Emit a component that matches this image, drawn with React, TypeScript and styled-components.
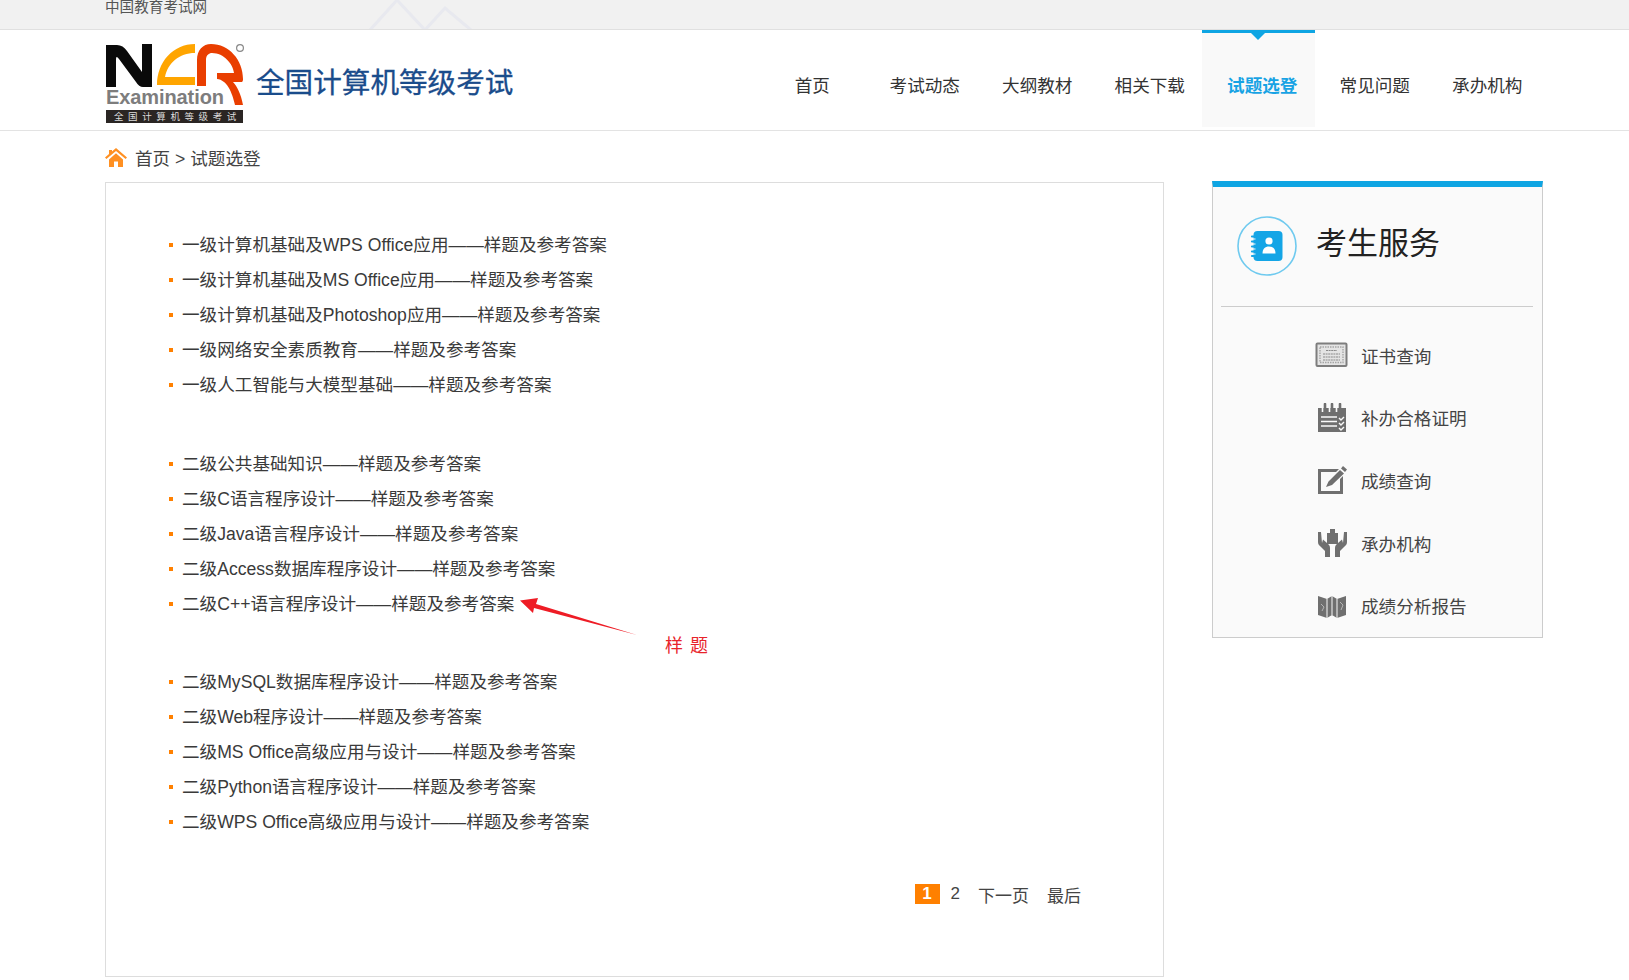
import styled, { createGlobalStyle } from "styled-components";

const GlobalStyle = createGlobalStyle`
  html, body {
    margin: 0;
    padding: 0;
    background: #fff;
    overflow: hidden;
  }
  body {
    font-family: "Liberation Sans", "Noto Sans CJK SC", sans-serif;
    color: #333;
  }
`;

const TopBar = styled.div`
  position: relative;
  height: 29px;
  background: #f1f1f1;
  border-bottom: 1px solid #e0e0e0;
  padding-left: 105px;
  overflow: hidden;
`;

const TopText = styled.span`
  display: block;
  font-size: 14.6px;
  line-height: 14px;
  color: #555;
`;

const Mountains = styled.svg`
  position: absolute;
  left: 365px;
  top: 0;
`;

const Header = styled.header`
  height: 100px;
  border-bottom: 1px solid #e3e3e3;
  padding: 0 89.5px 0 105px;
  display: flex;
  justify-content: space-between;
`;

const Brand = styled.div`
  display: flex;
  align-items: flex-start;
  padding-top: 14px;
`;

const BrandTitle = styled.div`
  margin: 21px 0 0 11px;
  font-size: 28.6px;
  line-height: 36px;
  color: #1a4c8b;
  -webkit-text-stroke: 0.3px #1a4c8b;
`;

const Nav = styled.nav`
  display: flex;
`;

const NavItem = styled.a<{ $active?: boolean }>`
  position: relative;
  box-sizing: border-box;
  width: 112.5px;
  height: 97px;
  padding: 39px 0 0 8px;
  text-align: center;
  font-size: 17.6px;
  line-height: 28px;
  color: ${(p) => (p.$active ? "#18a3e4" : "#333")};
  font-weight: ${(p) => (p.$active ? 700 : 400)};
  background: ${(p) => (p.$active ? "#f9f9f9" : "transparent")};
  border-top: ${(p) => (p.$active ? "3px solid #0ea5e3" : "3px solid transparent")};

  &::after {
    content: "";
    display: ${(p) => (p.$active ? "block" : "none")};
    position: absolute;
    top: 0;
    left: 50%;
    margin-left: -7px;
    border-left: 7.5px solid transparent;
    border-right: 7.5px solid transparent;
    border-top: 7px solid #0ea5e3;
  }
`;

const Crumbs = styled.div`
  height: 51px;
  padding: 2px 0 0 105px;
  box-sizing: border-box;
  display: flex;
  align-items: center;
  gap: 8px;
  font-size: 17.6px;
  color: #444;
`;

const Body = styled.div`
  display: flex;
  align-items: flex-start;
  gap: 48px;
  padding-left: 105px;
`;

const MainBox = styled.main`
  position: relative;
  box-sizing: border-box;
  width: 1059px;
  height: 795px;
  border: 1px solid #ddd;
  padding: 43px 82px 0 63px;
`;

const Group = styled.ul`
  list-style: none;
  margin: 0 0 43.5px;
  padding: 0;
`;

const Row = styled.li`
  display: flex;
  align-items: center;
  height: 35px;
  font-size: 17.6px;
  color: #3a3a3a;

  &::before {
    content: "";
    width: 4px;
    height: 4px;
    margin: 3px 9px 0 0;
    background: #ff8000;
  }
`;

const Pager = styled.div`
  display: flex;
  justify-content: flex-end;
  align-items: center;
  height: 20px;
  margin-top: 46px;
  font-size: 17px;
  color: #444;
`;

const PageNow = styled.span`
  width: 25px;
  height: 20px;
  line-height: 20px;
  text-align: center;
  background: #ff8000;
  color: #fff;
  font-weight: 700;
`;

const PageLink = styled.a<{ $gap: number }>`
  margin-left: ${(p) => p.$gap}px;
`;

const ArrowMark = styled.svg`
  position: absolute;
  left: 409px;
  top: 412px;
`;

const ArrowLabel = styled.span`
  position: absolute;
  left: 559px;
  top: 451px;
  font-size: 18px;
  line-height: 24px;
  letter-spacing: 7px;
  color: #e8232a;
`;

const Side = styled.aside`
  box-sizing: border-box;
  width: 331px;
  height: 457px;
  margin-top: -1px;
  background: #fafafa;
  border: 1px solid #ccc;
  border-top: 6px solid #0ea5e3;
`;

const SideHead = styled.div`
  display: flex;
  align-items: center;
  gap: 19px;
  padding: 29px 0 30px 24px;
  margin: 0 9px;
  margin-left: 8px;
  padding-left: 16px;
  border-bottom: 1px solid #ccc;
`;

const SideTitle = styled.h2`
  margin: 0 0 4px;
  font-size: 31px;
  font-weight: 400;
  line-height: 40px;
  color: #222;
`;

const ServiceList = styled.div`
  margin-top: 17px;
`;

const ServiceRow = styled.a`
  display: flex;
  align-items: center;
  height: 62.6px;
  padding-left: 102px;
  gap: 12px;
  font-size: 17.6px;
  color: #444;
`;

function Logo() {
  return (
    <svg width="140" height="80" viewBox="0 0 140 80">
      <path d="M1 43V1H12Q18 1 22 7L37 28V0H47V43H38Q34 43 31 38L14 15Q11 11 11 15V43Z" fill="#0a0a0a" />
      <path d="M52 41C52 18 68 0 90 0V9C74 9 63 19 60 33H90V41Z" fill="#ffa500" />
      <path
        d="M92 42V16C92 6 98 0 106 0C124 0 138 16 138 35C138 36 138 37 137 38H128C132 42 136 50 138 61H130C127 48 122 36 112 35V29H129C128 20 119 9 107 9C104 9 101 11 101 16V42Z"
        fill="#e93e00"
      />
      <circle cx="135" cy="4" r="3.4" fill="none" stroke="#888" strokeWidth="1.2" />
      <text x="1" y="60" fontFamily="Liberation Sans" fontWeight="700" fontSize="20" fill="#7d7d7d" textLength="118">
        Examination
      </text>
      <rect x="1" y="66" width="137" height="13" fill="#2a2523" />
      <text x="9" y="76" fontFamily="Noto Sans CJK SC" fontSize="9.5" fill="#ddd" letterSpacing="4.6">
        全国计算机等级考试
      </text>
    </svg>
  );
}

function HomeIcon() {
  return (
    <svg width="22" height="20" viewBox="0 0 22 20">
      <path d="M11 0L22 9.5 20.6 11 11 3 1.4 11 0 9.5 4 6V2H7V3.5Z" fill="#ff9022" />
      <path d="M4 11.5L11 5.3 18 11.5V19H13V13.5H9V19H4Z" fill="#ff9022" />
    </svg>
  );
}

function ContactIcon() {
  return (
    <svg width="60" height="60" viewBox="0 0 60 60">
      <circle cx="30" cy="30" r="29" fill="none" stroke="#6fcaef" strokeWidth="1.6" />
      <rect x="16.5" y="15" width="29" height="30" rx="4" fill="#14a5e6" />
      <path d="M15 20.5h4M15 25.5h4M15 30.5h4M15 35.5h4M15 40h4" stroke="#14a5e6" strokeWidth="2.2" strokeLinecap="round" />
      <path d="M15.5 23h3M15.5 28h3M15.5 33h3M15.5 38h3" stroke="#fafafa" strokeWidth="1" />
      <circle cx="32" cy="25" r="3.6" fill="#fff" />
      <path d="M25.5 37.5C25.5 33 28 30.5 32 30.5S38.5 33 38.5 37.5Z" fill="#fff" />
    </svg>
  );
}

function CertIcon() {
  return (
    <svg width="34" height="26" viewBox="0 0 34 26">
      <rect x="1.5" y="1.5" width="30" height="22.5" rx="1" fill="#e4e4e4" stroke="#7d7d7d" strokeWidth="2" />
      <rect x="5" y="5" width="23" height="15.5" fill="none" stroke="#a5a5a5" strokeWidth="1.4" strokeDasharray="1.5 1" />
      <path d="M11 8.5h11M8 12h17M8 15h17M8 18h17" stroke="#8a8a8a" strokeWidth="1.2" strokeDasharray="2 .6" />
    </svg>
  );
}

function CalendarIcon() {
  return (
    <svg width="34" height="30" viewBox="0 0 34 30">
      <path d="M3 5H31V29H3Z" fill="#6f6f6f" />
      <path d="M10 1v8M17 1v8M25 1v8" stroke="#6f6f6f" strokeWidth="2.6" strokeLinecap="round" />
      <path d="M7.5 5v4M14.5 5v4M21.5 5v4" stroke="#fafafa" strokeWidth="1.6" />
      <path d="M6 14H22M6 18.5H22M6 23H22" stroke="#fafafa" strokeWidth="1.6" />
      <path d="M24 15l2 2 3-3M24 20l2 2 3-3M24 25l2 2 3-3" fill="none" stroke="#fafafa" strokeWidth="1.4" />
    </svg>
  );
}

function EditIcon() {
  return (
    <svg width="34" height="30" viewBox="0 0 34 30">
      <path d="M3 4H24L21 7H6V26H25V14L28 11V29H3Z" fill="#6f6f6f" />
      <path d="M28 1L32 4.5 30 7 26 3.5ZM25 5L29 8.5 17 20 11 22 13.5 16.5Z" fill="#6f6f6f" />
    </svg>
  );
}

function HandsIcon() {
  return (
    <svg width="34" height="30" viewBox="0 0 34 30">
      <path d="M12 5H15V1H20V5H23V16H12Z" fill="#6f6f6f" />
      <path d="M3 4V14C3 16 4 17.5 6 19L10 23V29H15V20C15 18 14 16.5 12 15L8 11.5 7 15 6 4Z" fill="#6f6f6f" />
      <path d="M32 4V14C32 16 31 17.5 29 19L25 23V29H20V20C20 18 21 16.5 23 15L27 11.5 28 15 29 4Z" fill="#6f6f6f" />
    </svg>
  );
}

function MapIcon() {
  return (
    <svg width="34" height="26" viewBox="0 0 34 26">
      <path d="M3 3L12 6 17 3 22 6 31 3V22L22 25 17 22 12 25 3 22Z" fill="#6f6f6f" />
      <path d="M12 6V25M17 3V22M22 6V25" stroke="#fafafa" strokeWidth="1" />
      <path d="M6 11l3 3-2 4M25 9l3 3-2 5" fill="none" stroke="#b5b5b5" strokeWidth="1" />
    </svg>
  );
}

const firstLevel = [
  "一级计算机基础及WPS Office应用——样题及参考答案",
  "一级计算机基础及MS Office应用——样题及参考答案",
  "一级计算机基础及Photoshop应用——样题及参考答案",
  "一级网络安全素质教育——样题及参考答案",
  "一级人工智能与大模型基础——样题及参考答案",
];

const secondLevelA = [
  "二级公共基础知识——样题及参考答案",
  "二级C语言程序设计——样题及参考答案",
  "二级Java语言程序设计——样题及参考答案",
  "二级Access数据库程序设计——样题及参考答案",
  "二级C++语言程序设计——样题及参考答案",
];

const secondLevelB = [
  "二级MySQL数据库程序设计——样题及参考答案",
  "二级Web程序设计——样题及参考答案",
  "二级MS Office高级应用与设计——样题及参考答案",
  "二级Python语言程序设计——样题及参考答案",
  "二级WPS Office高级应用与设计——样题及参考答案",
];

const navLinks = ["首页", "考试动态", "大纲教材", "相关下载", "试题选登", "常见问题", "承办机构"];

const services = [
  { label: "证书查询", icon: <CertIcon /> },
  { label: "补办合格证明", icon: <CalendarIcon /> },
  { label: "成绩查询", icon: <EditIcon /> },
  { label: "承办机构", icon: <HandsIcon /> },
  { label: "成绩分析报告", icon: <MapIcon /> },
];

function App() {
  return (
    <>
      <GlobalStyle />
      <TopBar>
        <TopText>中国教育考试网</TopText>
        <Mountains width="120" height="30" viewBox="0 0 120 30">
          <path d="M5 30L32 0 60 30M60 30L80 8 106 30" fill="none" stroke="#e8e9ef" strokeWidth="3" />
        </Mountains>
      </TopBar>
      <Header>
        <Brand>
          <Logo />
          <BrandTitle>全国计算机等级考试</BrandTitle>
        </Brand>
        <Nav>
          {navLinks.map((link) => (
            <NavItem key={link} $active={link === "试题选登"}>
              {link}
            </NavItem>
          ))}
        </Nav>
      </Header>
      <Crumbs>
        <HomeIcon />
        <span>首页 &gt; 试题选登</span>
      </Crumbs>
      <Body>
        <MainBox>
          {[firstLevel, secondLevelA, secondLevelB].map((rows, i) => (
            <Group key={i}>
              {rows.map((row) => (
                <Row key={row}>{row}</Row>
              ))}
            </Group>
          ))}
          <Pager>
            <PageNow>1</PageNow>
            <PageLink $gap={11}>2</PageLink>
            <PageLink $gap={18}>下一页</PageLink>
            <PageLink $gap={18}>最后</PageLink>
          </Pager>
          <ArrowMark width="125" height="45" viewBox="0 0 125 45">
            <path d="M5 5.5L23 3 21 9 122 40 19 13 18 18Z" fill="#ee1c25" />
          </ArrowMark>
          <ArrowLabel>样题</ArrowLabel>
        </MainBox>
        <Side>
          <SideHead>
            <ContactIcon />
            <SideTitle>考生服务</SideTitle>
          </SideHead>
          <ServiceList>
            {services.map((s) => (
              <ServiceRow key={s.label}>
                {s.icon}
                <span>{s.label}</span>
              </ServiceRow>
            ))}
          </ServiceList>
        </Side>
      </Body>
    </>
  );
}

export default App;
